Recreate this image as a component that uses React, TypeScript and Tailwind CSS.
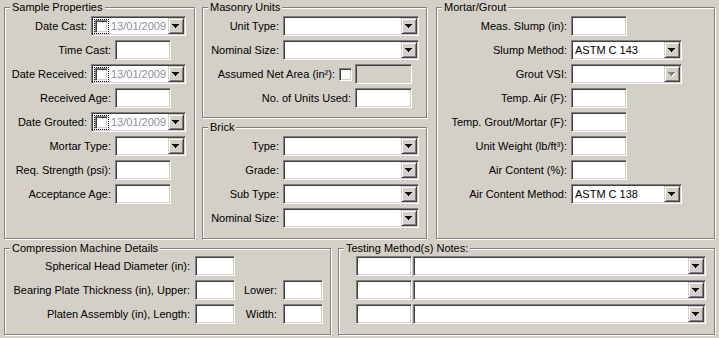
import type { ReactNode } from 'react'

// classic 3D edges
const sunken =
  'border border-t-[#808080] border-l-[#808080] border-r-white border-b-white shadow-[inset_1px_1px_0_#404040,inset_-1px_-1px_0_#d4d0c8]'
const raised =
  'border border-t-[#d4d0c8] border-l-[#d4d0c8] border-r-[#404040] border-b-[#404040] shadow-[inset_1px_1px_0_#fff,inset_-1px_-1px_0_#808080]'

function Group({ title, className = '', children }: { title: string; className?: string; children?: ReactNode }) {
  return (
    <div className={`relative border border-[#808080] shadow-[inset_1px_1px_0_#fff,1px_1px_0_#fff] ${className}`}>
      <span className="absolute left-[5px] top-[-7px] whitespace-nowrap bg-[#d4d0c8] px-[2px] leading-[13px]">{title}</span>
      {children}
    </div>
  )
}

function Row({ label, children }: { label: string; children: ReactNode }) {
  return (
    <div className="flex h-5 items-center justify-end">
      <span className="mr-[4px] whitespace-nowrap leading-[13px]">{label}</span>
      {children}
    </div>
  )
}

function TextBox({ className = '', disabled }: { className?: string; disabled?: boolean }) {
  return <div className={`h-5 shrink-0 ${disabled ? 'bg-[#d4d0c8]' : 'bg-white'} ${sunken} ${className}`} />
}

function DropButton({ disabled }: { disabled?: boolean }) {
  return (
    <div className={`flex h-4 w-4 shrink-0 items-center bg-[#d4d0c8] ${raised}`}>
      <svg width="8" height="5" viewBox="0 0 8 5" className="ml-[3px] block">
        {disabled && <path d="M1 1h7v1H1zM2 2h5v1H2zM3 3h3v1H3zM4 4h1v1H4z" fill="#fff" />}
        <path d="M0 0h7v1H0zM1 1h5v1H1zM2 2h3v1H2zM3 3h1v1H3z" fill={disabled ? '#808080' : '#000'} />
      </svg>
    </div>
  )
}

function Combo({ className = '', value, disabled }: { className?: string; value?: string; disabled?: boolean }) {
  return (
    <div className={`flex h-5 shrink-0 bg-white p-[1px] ${sunken} ${className}`}>
      <div className="flex-1 overflow-hidden whitespace-nowrap pl-[2px] leading-[16px]">{value}</div>
      <DropButton disabled={disabled} />
    </div>
  )
}

function CheckBox() {
  return <div className={`h-[13px] w-[13px] shrink-0 bg-white ${sunken}`} />
}

function DatePicker() {
  return (
    <div className={`flex h-5 w-[95px] shrink-0 items-center bg-white p-[1px] ${sunken}`}>
      <div className="ml-[1px] border border-dotted border-black">
        <CheckBox />
      </div>
      <div className="ml-[2px] flex-1 whitespace-nowrap leading-[16px] text-[#8e8e9c]">13/01/2009</div>
      <DropButton />
    </div>
  )
}

export default function App() {
  return (
    <div className="h-[338px] w-[719px] overflow-hidden bg-[#d4d0c8] pt-[7px] font-['Liberation_Sans',Arial,sans-serif] text-[11px] text-black">
      <div className="flex h-[232px]">
        <Group title="Sample Properties" className="ml-[4px] w-[191px] pr-[8px] pt-[8px]">
          <div className="flex flex-col gap-1">
            <Row label="Date Cast:"><DatePicker /></Row>
            <Row label="Time Cast:"><TextBox className="mr-[15px] w-[56px]" /></Row>
            <Row label="Date Received:"><DatePicker /></Row>
            <Row label="Received Age:"><TextBox className="mr-[15px] w-[56px]" /></Row>
            <Row label="Date Grouted:"><DatePicker /></Row>
            <Row label="Mortar Type:"><Combo className="w-[71px]" /></Row>
            <Row label="Req. Strength (psi):"><TextBox className="mr-[15px] w-[56px]" /></Row>
            <Row label="Acceptance Age:"><TextBox className="mr-[15px] w-[56px]" /></Row>
          </div>
        </Group>

        <div className="ml-[7px] flex w-[225px] flex-col">
          <Group title="Masonry Units" className="h-[111px] pr-[7px] pt-[8px]">
            <div className="flex flex-col gap-1">
              <Row label="Unit Type:"><Combo className="w-[136px]" /></Row>
              <Row label="Nominal Size:"><Combo className="w-[136px]" /></Row>
              <Row label="Assumed Net Area (in²):">
                <CheckBox />
                <TextBox disabled className="ml-[3px] mr-[7px] w-[57px]" />
              </Row>
              <Row label="No. of Units Used:"><TextBox className="mr-[7px] w-[57px]" /></Row>
            </div>
          </Group>
          <Group title="Brick" className="mt-[9px] h-[112px] pr-[7px] pt-[8px]">
            <div className="flex flex-col gap-1">
              <Row label="Type:"><Combo className="w-[136px]" /></Row>
              <Row label="Grade:"><Combo className="w-[136px]" /></Row>
              <Row label="Sub Type:"><Combo className="w-[136px]" /></Row>
              <Row label="Nominal Size:"><Combo className="w-[136px]" /></Row>
            </div>
          </Group>
        </div>

        <Group title="Mortar/Grout" className="ml-[9px] w-[279px] pr-[32px] pt-[8px]">
          <div className="flex flex-col gap-1">
            <Row label="Meas. Slump (in):"><TextBox className="mr-[55px] w-[56px]" /></Row>
            <Row label="Slump Method:"><Combo className="w-[111px]" value="ASTM C 143" /></Row>
            <Row label="Grout VSI:"><Combo className="w-[111px]" disabled /></Row>
            <Row label="Temp. Air (F):"><TextBox className="mr-[55px] w-[56px]" /></Row>
            <Row label="Temp. Grout/Mortar (F):"><TextBox className="mr-[55px] w-[56px]" /></Row>
            <Row label="Unit Weight (lb/ft³):"><TextBox className="mr-[55px] w-[56px]" /></Row>
            <Row label="Air Content (%):"><TextBox className="mr-[55px] w-[56px]" /></Row>
            <Row label="Air Content Method:"><Combo className="w-[111px]" value="ASTM C 138" /></Row>
          </div>
        </Group>
      </div>

      <div className="mt-[9px] flex h-[87px]">
        <Group title="Compression Machine Details" className="ml-[4px] w-[327px] pt-[7px]">
          <div className="flex flex-col gap-1">
            <div className="flex h-5 items-center">
              <span className="w-[185px] whitespace-nowrap text-right leading-[13px]">Spherical Head Diameter (in):</span>
              <TextBox className="ml-[5px] w-[40px]" />
            </div>
            <div className="flex h-5 items-center">
              <span className="w-[185px] whitespace-nowrap text-right leading-[13px]">Bearing Plate Thickness (in), Upper:</span>
              <TextBox className="ml-[5px] w-[40px]" />
              <span className="w-[42px] text-right leading-[13px]">Lower:</span>
              <TextBox className="ml-[6px] w-[40px]" />
            </div>
            <div className="flex h-5 items-center">
              <span className="w-[185px] whitespace-nowrap text-right leading-[13px]">Platen Assembly (in), Length:</span>
              <TextBox className="ml-[5px] w-[40px]" />
              <span className="w-[42px] text-right leading-[13px]">Width:</span>
              <TextBox className="ml-[6px] w-[40px]" />
            </div>
          </div>
        </Group>

        <Group title="Testing Method(s) Notes:" className="ml-[7px] w-[377px] pl-[17px] pt-[7px]">
          <div className="flex flex-col gap-1">
            {[0, 1, 2].map((i) => (
              <div key={i} className="flex h-5">
                <TextBox className="w-[56px]" />
                <Combo className="ml-[1px] w-[293px]" />
              </div>
            ))}
          </div>
        </Group>
      </div>
    </div>
  )
}
